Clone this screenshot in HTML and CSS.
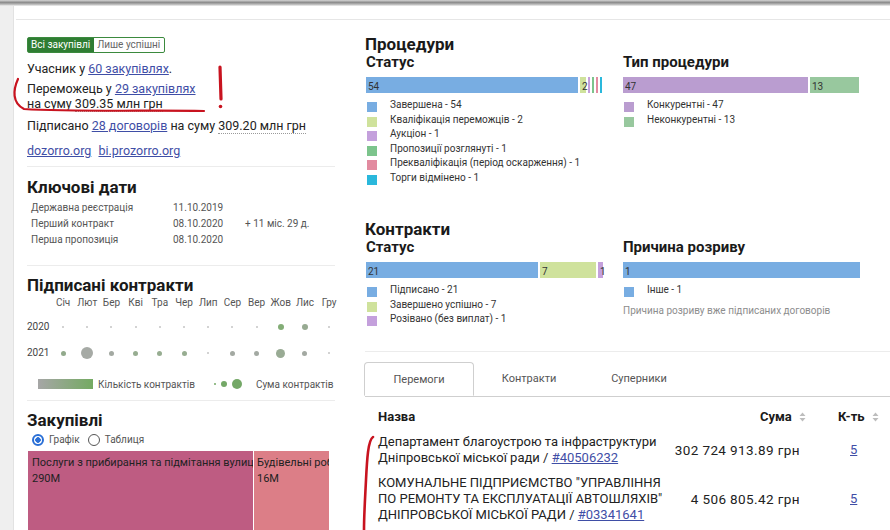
FILE: index.html
```html
<!DOCTYPE html>
<html lang="uk">
<head>
    <meta charset="UTF-8">
    <title>Постачальник</title>
    <link rel="stylesheet" href="styles.css">
</head>
<body>
    <div class="topbar"></div>
    <div class="page">
        <div class="side"></div>
        <div class="main">
            <div class="content">
                <div class="left">
                    <section class="summary">
                        <div class="toggle">
                            <span class="toggle-btn active">Всі закупівлі</span>
                            <span class="toggle-btn">Лише успішні</span>
                        </div>
                        <p class="s1">Учасник у <a href="#">60 закупівлях</a>.</p>
                        <p class="s2">Переможець у <a href="#">29 закупівлях</a><br>на суму <span class="amount">309.35 млн грн</span></p>
                        <p class="s3">Підписано <a href="#">28 договорів</a> на суму <span class="amount">309.20 млн грн</span></p>
                        <p class="s4"><a href="#">dozorro.org</a> <a href="#">bi.prozorro.org</a></p>
                    </section>

                    <section class="block dates">
                        <h2>Ключові дати</h2>
                        <div class="date-row"><span class="d-label">Державна реєстрація</span><span class="d-date">11.10.2019</span><span></span></div>
                        <div class="date-row"><span class="d-label">Перший контракт</span><span class="d-date">08.10.2020</span><span>+ 11 міс. 29 д.</span></div>
                        <div class="date-row"><span class="d-label">Перша пропозиція</span><span class="d-date">08.10.2020</span><span></span></div>
                    </section>

                    <section class="block signed">
                        <h2>Підписані контракти</h2>
                        <div class="calendar">
                            <span></span>
                            <span class="month">Січ</span><span class="month">Лют</span><span class="month">Бер</span><span class="month">Кві</span>
                            <span class="month">Тра</span><span class="month">Чер</span><span class="month">Лип</span><span class="month">Сер</span>
                            <span class="month">Вер</span><span class="month">Жов</span><span class="month">Лис</span><span class="month">Гру</span>

                            <span class="year">2020</span>
                            <span class="cell"><i class="dot" style="width:2px;height:2px;background:#c4c4c4"></i></span>
                            <span class="cell"><i class="dot" style="width:2px;height:2px;background:#c4c4c4"></i></span>
                            <span class="cell"><i class="dot" style="width:2px;height:2px;background:#c4c4c4"></i></span>
                            <span class="cell"><i class="dot" style="width:2px;height:2px;background:#c4c4c4"></i></span>
                            <span class="cell"><i class="dot" style="width:2px;height:2px;background:#c4c4c4"></i></span>
                            <span class="cell"><i class="dot" style="width:2px;height:2px;background:#c4c4c4"></i></span>
                            <span class="cell"><i class="dot" style="width:2px;height:2px;background:#c4c4c4"></i></span>
                            <span class="cell"><i class="dot" style="width:2px;height:2px;background:#c4c4c4"></i></span>
                            <span class="cell"><i class="dot" style="width:2px;height:2px;background:#c4c4c4"></i></span>
                            <span class="cell"><i class="dot" style="width:6px;height:6px;background:#83ad76"></i></span>
                            <span class="cell"><i class="dot" style="width:6px;height:6px;background:#97aa92"></i></span>
                            <span class="cell"><i class="dot" style="width:2px;height:2px;background:#c4c4c4"></i></span>

                            <span class="year">2021</span>
                            <span class="cell"><i class="dot" style="width:5px;height:5px;background:#92aa8c"></i></span>
                            <span class="cell"><i class="dot" style="width:12px;height:12px;background:#a6aaa5"></i></span>
                            <span class="cell"><i class="dot" style="width:5px;height:5px;background:#a3a9a2"></i></span>
                            <span class="cell"><i class="dot" style="width:5px;height:5px;background:#97ad91"></i></span>
                            <span class="cell"><i class="dot" style="width:5px;height:5px;background:#97ad91"></i></span>
                            <span class="cell"><i class="dot" style="width:5px;height:5px;background:#97ad91"></i></span>
                            <span class="cell"><i class="dot" style="width:2px;height:2px;background:#c4c4c4"></i></span>
                            <span class="cell"><i class="dot" style="width:5px;height:5px;background:#a3a9a2"></i></span>
                            <span class="cell"><i class="dot" style="width:5px;height:5px;background:#a3a9a2"></i></span>
                            <span class="cell"><i class="dot" style="width:9px;height:9px;background:#99ab94"></i></span>
                            <span class="cell"><i class="dot" style="width:5px;height:5px;background:#a3a9a2"></i></span>
                            <span class="cell"><i class="dot" style="width:2px;height:2px;background:#c4c4c4"></i></span>
                        </div>
                        <div class="cal-legend">
                            <span class="gradient"></span>
                            <span class="cal-text">Кількість контрактів</span>
                            <span class="sizes">
                                <i class="dot" style="width:2px;height:2px"></i>
                                <i class="dot" style="width:6px;height:6px"></i>
                                <i class="dot" style="width:10px;height:10px"></i>
                            </span>
                            <span class="cal-text">Сума контрактів</span>
                        </div>
                    </section>

                    <section class="block purchases">
                        <h2>Закупівлі</h2>
                        <div class="radios">
                            <label class="radio"><span class="radio-circle checked"></span>Графік</label>
                            <label class="radio"><span class="radio-circle"></span>Таблиця</label>
                        </div>
                        <div class="treemap">
                            <div class="tile tile-big">Послуги з прибирання та підмітання вулиць<br>290M</div>
                            <div class="tile tile-small">Будівельні роботи<br>16M</div>
                        </div>
                    </section>
                </div>

                <div class="right">
                    <section class="proc">
                        <h2>Процедури</h2>
                        <div class="charts">
                            <div class="chart">
                                <h3>Статус</h3>
                                <div class="bar">
                                    <span class="seg c-blue" style="width:212px">54</span>
                                    <span class="seg c-lime" style="width:6px">2</span>
                                    <span class="seg c-purple" style="width:2px"></span>
                                    <span class="seg c-green" style="width:2px"></span>
                                    <span class="seg c-pink" style="width:2px"></span>
                                    <span class="seg c-cyan" style="width:2px"></span>
                                </div>
                                <ul class="legend">
                                    <li><span class="sq c-blue"></span>Завершена - 54</li>
                                    <li><span class="sq c-lime"></span>Кваліфікація переможців - 2</li>
                                    <li><span class="sq c-purple"></span>Аукціон - 1</li>
                                    <li><span class="sq c-green"></span>Пропозиції розглянуті - 1</li>
                                    <li><span class="sq c-pink"></span>Прекваліфікація (період оскарження) - 1</li>
                                    <li><span class="sq c-cyan"></span>Торги відмінено - 1</li>
                                </ul>
                            </div>
                            <div class="chart">
                                <h3>Тип процедури</h3>
                                <div class="bar">
                                    <span class="seg c-violet" style="width:185px">47</span>
                                    <span class="seg c-sage" style="width:49px">13</span>
                                </div>
                                <ul class="legend">
                                    <li><span class="sq c-violet"></span>Конкурентні - 47</li>
                                    <li><span class="sq c-sage"></span>Неконкурентні - 13</li>
                                </ul>
                            </div>
                        </div>
                    </section>

                    <section class="proc contracts">
                        <h2>Контракти</h2>
                        <div class="charts">
                            <div class="chart">
                                <h3>Статус</h3>
                                <div class="bar">
                                    <span class="seg c-blue" style="width:172px">21</span>
                                    <span class="seg c-lime" style="width:56px">7</span>
                                    <span class="seg c-purple" style="width:5px">1</span>
                                </div>
                                <ul class="legend">
                                    <li><span class="sq c-blue"></span>Підписано - 21</li>
                                    <li><span class="sq c-lime"></span>Завершено успішно - 7</li>
                                    <li><span class="sq c-purple"></span>Розівано (без виплат) - 1</li>
                                </ul>
                            </div>
                            <div class="chart">
                                <h3>Причина розриву</h3>
                                <div class="bar">
                                    <span class="seg c-blue" style="width:238px">1</span>
                                </div>
                                <ul class="legend">
                                    <li><span class="sq c-blue"></span>Інше - 1</li>
                                </ul>
                                <p class="note">Причина розриву вже підписаних договорів</p>
                            </div>
                        </div>
                    </section>

                    <section class="wins">
                        <div class="tabs">
                            <span class="tab active">Перемоги</span>
                            <span class="tab">Контракти</span>
                            <span class="tab">Суперники</span>
                        </div>
                        <table class="wins-table">
                            <colgroup>
                                <col class="w-name">
                                <col class="w-sum">
                                <col class="w-count">
                            </colgroup>
                            <thead>
                                <tr>
                                    <th class="col-name">Назва</th>
                                    <th class="col-sum">Сума <svg class="sort" width="7" height="10" viewBox="0 0 7 10"><path d="M3.5 0.5 L6.5 4 H0.5 Z M3.5 9.5 L6.5 6 H0.5 Z" fill="#bdbdbd"/></svg></th>
                                    <th class="col-count">К-ть <svg class="sort" width="7" height="10" viewBox="0 0 7 10"><path d="M3.5 0.5 L6.5 4 H0.5 Z M3.5 9.5 L6.5 6 H0.5 Z" fill="#bdbdbd"/></svg></th>
                                </tr>
                            </thead>
                            <tbody>
                                <tr>
                                    <td class="col-name">Департамент благоустрою та інфраструктури Дніпровської міської ради / <a href="#">#40506232</a></td>
                                    <td class="col-sum">302 724 913.89 грн</td>
                                    <td class="col-count"><a href="#">5</a></td>
                                </tr>
                                <tr>
                                    <td class="col-name">КОМУНАЛЬНЕ ПІДПРИЄМСТВО "УПРАВЛІННЯ ПО РЕМОНТУ ТА ЕКСПЛУАТАЦІЇ АВТОШЛЯХІВ" ДНІПРОВСЬКОЇ МІСЬКОЇ РАДИ / <a href="#">#03341641</a></td>
                                    <td class="col-sum">4 506 805.42 грн</td>
                                    <td class="col-count"><a href="#">5</a></td>
                                </tr>
                            </tbody>
                        </table>
                    </section>
                </div>
            </div>
        </div>
    </div>

    <!-- позначки від руки поверх скріншота -->
    <svg class="marks" width="890" height="530" viewBox="0 0 890 530">
        <path d="M18 79 C13 90 12 103 24 109 C70 112 150 110 204 111" fill="none" stroke="#c8131f" stroke-width="2.2" stroke-linecap="round"/>
        <path d="M220 67 L221 99" fill="none" stroke="#c8131f" stroke-width="3.2" stroke-linecap="round"/>
        <circle cx="220.5" cy="106.5" r="1.8" fill="#c8131f"/>
        <path d="M373 437 C368 440 367 460 366 480 C365 500 364 515 364 530" fill="none" stroke="#c8131f" stroke-width="2.6" stroke-linecap="round"/>
    </svg>
</body>
</html>
```

FILE: styles.css
```css
body {
    margin: 0;
    width: 890px;
    height: 530px;
    overflow: hidden;
    position: relative;
    font-family: Roboto, "Liberation Sans", Arial, sans-serif;
    color: #222;
    background: #fff;
}
a {
    color: #3f4ea6;
}
.topbar {
    height: 6px;
    background: linear-gradient(#d6d6d6 0, #8c8c8c 40%, #b4b4b4 70%, #f2f2f2 100%);
}
.page {
    display: flex;
}
.side {
    width: 13px;
    height: 524px;
    background: #efefef;
    border-right: 1px solid #e2e2e2;
}
.main {
    flex: 1;
    margin-left: 2px;
    margin-top: 13px;
    border-top: 1px solid #e6e6e6;
}
.content {
    display: flex;
    padding-left: 11px;
}
.left {
    width: 308px;
    flex-shrink: 0;
}
.right {
    width: 525px;
    margin-left: 30px;
    flex-shrink: 0;
}

/* ліва колонка */
.summary {
    padding-top: 16px;
    padding-bottom: 8px;
    font-size: 12.5px;
}
.summary p {
    margin: 0;
    line-height: 15px;
}
.toggle {
    display: inline-flex;
    border: 1px solid #3b8a3e;
    border-radius: 2px;
    font-size: 10px;
    line-height: 14px;
}
.toggle-btn {
    padding: 0 4px 0 3px;
    color: #666;
}
.toggle-btn.active {
    background: #2f7d33;
    color: #fff;
}
.summary .s1 { margin-top: 8px; }
.summary .s2 { margin-top: 5px; }
.summary .s3 { margin-top: 7px; }
.summary .s4 { margin-top: 10px; }
.summary .s4 a { margin-right: 4px; }
.amount {
    border-bottom: 1px dotted #9a9a9a;
}
.block {
    border-top: 1px solid #ececec;
}
.block h2 {
    margin: 0;
    font-size: 17px;
    line-height: 20px;
    font-weight: 700;
    color: #1a1a1a;
}
.dates {
    padding-top: 10px;
    padding-bottom: 17px;
}
.dates h2 {
    margin-bottom: 3px;
}
.date-row {
    display: grid;
    grid-template-columns: 142px 72px 1fr;
    padding-left: 4px;
    font-size: 10px;
    line-height: 16px;
    color: #555;
}
.signed {
    padding-top: 9px;
    padding-bottom: 10px;
}
.calendar {
    display: grid;
    grid-template-columns: 24px repeat(12, 24.2px);
    grid-template-rows: 17px 26px 26px;
    margin-top: 2px;
    font-size: 10px;
    color: #555;
}
.month {
    text-align: center;
    line-height: 12px;
    align-self: start;
}
.year {
    line-height: 26px;
    color: #444;
}
.cell {
    display: flex;
    align-items: center;
    justify-content: center;
}
.dot {
    display: block;
    border-radius: 50%;
    background: #7aa86e;
}
.cal-legend {
    display: flex;
    align-items: center;
    margin-top: 12px;
    height: 12px;
    padding-left: 11px;
    font-size: 10px;
    color: #555;
}
.gradient {
    width: 55px;
    height: 10px;
    background: linear-gradient(to right, #a6a6a6, #74aa62);
}
.cal-text {
    margin-left: 5px;
}
.sizes {
    display: flex;
    align-items: center;
    gap: 5px;
    margin-left: 19px;
    margin-right: 9px;
}
.sizes .dot {
    background: #74a867;
}
.purchases {
    padding-top: 9px;
}
.radios {
    display: flex;
    gap: 8px;
    margin-top: 4px;
    padding-left: 5px;
    font-size: 10px;
    line-height: 12px;
    color: #555;
}
.radio {
    display: flex;
    align-items: center;
    gap: 5px;
}
.radio-circle {
    width: 12px;
    height: 12px;
    border: 1px solid #555;
    border-radius: 50%;
    box-sizing: border-box;
}
.radio-circle.checked {
    border: 2px solid #2a6fd6;
    background: radial-gradient(circle, #2a6fd6 0 2.5px, #fff 3px);
}
.treemap {
    display: flex;
    gap: 1px;
    margin-top: 5px;
    margin-left: 1px;
    width: 302px;
    height: 100px;
}
.tile {
    padding: 4px 4px;
    font-size: 11px;
    line-height: 16px;
    color: #222;
    white-space: nowrap;
    overflow: hidden;
}
.tile-big {
    width: 217px;
    background: #be5c82;
}
.tile-small {
    width: 68px;
    padding-left: 3px;
    background: #dc7e87;
}

/* права колонка */
.proc h2 {
    margin: 14px 0 0;
    font-size: 17px;
    line-height: 20px;
    font-weight: 700;
    color: #1a1a1a;
}
.contracts h2 {
    margin-top: 34px;
}
.charts {
    display: grid;
    grid-template-columns: 237px 237px;
    column-gap: 20px;
    padding-left: 1px;
}
.chart h3 {
    margin: 0;
    font-size: 15px;
    line-height: 16px;
    font-weight: 700;
    color: #1a1a1a;
}
.bar {
    display: flex;
    gap: 2px;
    height: 16px;
    margin-top: 7px;
}
.seg {
    display: block;
    font-size: 10px;
    line-height: 19px;
    padding-left: 2px;
    box-sizing: border-box;
    white-space: nowrap;
    color: #333;
}
.legend {
    list-style: none;
    margin: 5px 0 0;
    padding: 0;
    font-size: 10px;
    color: #333;
}
.legend li {
    display: flex;
    align-items: flex-start;
    height: 14.5px;
    line-height: 14px;
}
.sq {
    width: 10px;
    height: 10px;
    margin: 4px 13px 0 1px;
    flex-shrink: 0;
}
.note {
    margin: 6px 0 0;
    font-size: 10px;
    line-height: 14px;
    color: #8d8d8d;
}
.c-blue { background: #78ade2; }
.c-lime { background: #cfe29c; }
.c-purple { background: #c4a0dc; }
.c-green { background: #7cc48c; }
.c-pink { background: #e28ba0; }
.c-cyan { background: #2ab8dc; }
.c-violet { background: #ba9dd0; }
.c-sage { background: #98c89e; }

.wins {
    margin-top: 24px;
    border-top: 1px solid #ececec;
}
.tabs {
    display: flex;
    margin-top: 10px;
    border-bottom: 1px solid #cfcfcf;
    height: 34px;
}
.tab {
    width: 110px;
    text-align: center;
    font-size: 11px;
    line-height: 34px;
    color: #555;
}
.tab.active {
    width: 108px;
    margin-left: -1px;
    border: 1px solid #cfcfcf;
    border-bottom: 1px solid #fff;
    border-radius: 4px 4px 0 0;
    background: #fff;
}
.wins-table {
    width: 525px;
    table-layout: fixed;
    border-collapse: collapse;
    margin-top: 12px;
    font-size: 13px;
    line-height: 16px;
}
.w-name { width: 305px; }
.w-sum { width: 145px; }
.w-count { width: 75px; }
.wins-table th {
    font-weight: 700;
    color: #1a1a1a;
    padding: 0 0 8px;
}
.wins-table td {
    padding: 1px 0 8px;
    vertical-align: middle;
    color: #222;
}
.wins-table .col-name {
    padding-left: 13px;
    padding-right: 6px;
    text-align: left;
}
.wins-table .col-sum {
    text-align: right;
    white-space: nowrap;
}
.wins-table th.col-sum {
    padding-right: 9px;
}
.wins-table td.col-sum {
    padding-right: 15px;
    font-size: 13.5px;
    letter-spacing: 0.4px;
}
.wins-table .col-count {
    text-align: left;
    padding-left: 23px;
}
.wins-table td.col-count {
    padding-left: 35px;
}
.sort {
    vertical-align: -1px;
    margin-left: 4px;
}

.marks {
    position: absolute;
    top: 0;
    left: 0;
    pointer-events: none;
}
```
